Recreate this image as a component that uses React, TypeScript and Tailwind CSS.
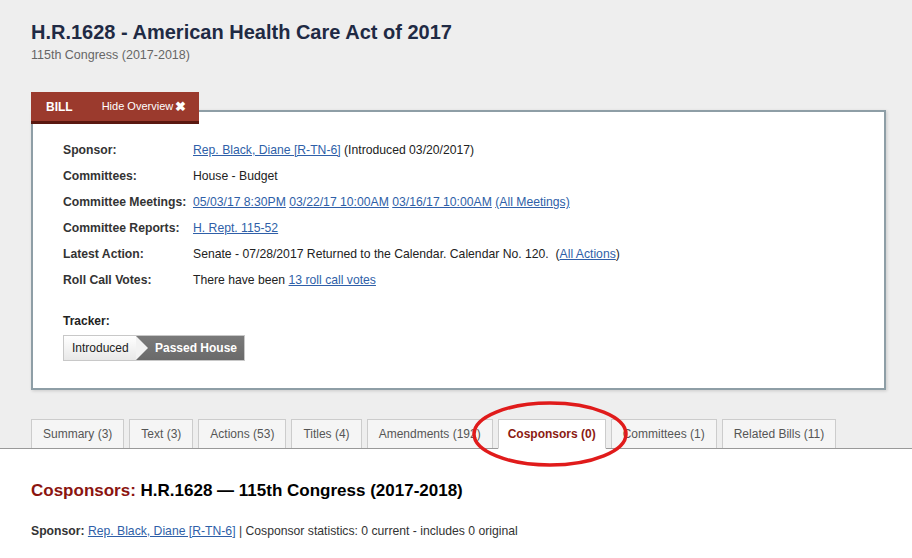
import React from "react";

const link = "text-[#2f5fa8] underline";

const rows: { label: string; value: React.ReactNode }[] = [
  {
    label: "Sponsor:",
    value: (
      <>
        <a className={link}>Rep. Black, Diane [R-TN-6]</a> (Introduced 03/20/2017)
      </>
    ),
  },
  { label: "Committees:", value: "House - Budget" },
  {
    label: "Committee Meetings:",
    value: (
      <>
        <a className={link}>05/03/17 8:30PM</a> <a className={link}>03/22/17 10:00AM</a>{" "}
        <a className={link}>03/16/17 10:00AM</a> <a className={link}>(All Meetings)</a>
      </>
    ),
  },
  { label: "Committee Reports:", value: <a className={link}>H. Rept. 115-52</a> },
  {
    label: "Latest Action:",
    value: (
      <>
        Senate - 07/28/2017 Returned to the Calendar. Calendar No. 120.&nbsp; (<a className={link}>All Actions</a>)
      </>
    ),
  },
  {
    label: "Roll Call Votes:",
    value: (
      <>
        There have been <a className={link}>13 roll call votes</a>
      </>
    ),
  },
];

const tabs = [
  "Summary (3)",
  "Text (3)",
  "Actions (53)",
  "Titles (4)",
  "Amendments (192)",
  "Cosponsors (0)",
  "Committees (1)",
  "Related Bills (11)",
];

export default function App() {
  return (
    <div className="w-[912px] h-[558px] overflow-hidden bg-[#eeeeee] font-['Liberation_Sans',Arial,sans-serif] relative">
      <div className="px-[31px] pt-[20px]">
        <h1 className="text-[20px] leading-[24px] font-bold text-[#1f2a44]">
          H.R.1628 - American Health Care Act of 2017
        </h1>
        <div className="text-[12.5px] leading-[14px] text-[#666] mt-[4px]">115th Congress (2017-2018)</div>

        <div className="mt-[30px] w-[855px]">
          <div className="relative z-10 flex items-center w-[168px] h-[32px] bg-[#9b3a2d] border-b-[3px] border-[#5a1810] text-white text-[12px]">
            <span className="font-bold ml-[15px]">BILL</span>
            <span className="ml-[29px] text-[11px] flex items-center gap-[2px]">
              Hide Overview <span className="font-bold text-[13px] leading-none">✖</span>
            </span>
          </div>
          <div className="-mt-[14px] h-[280px] bg-white border-2 border-[#8e9ea6] shadow-[1px_1px_3px_rgba(0,0,0,0.15)] pl-[30px] pt-[31px]">
            <div className="flex flex-col gap-[12px] text-[12.2px] leading-[14px] text-[#222]">
              {rows.map((r) => (
                <div key={r.label} className="flex">
                  <div className="w-[130px] font-bold text-[#333]">{r.label}</div>
                  <div>{r.value}</div>
                </div>
              ))}
            </div>
            <div className="mt-[27px] text-[12px] leading-[14px] font-bold text-[#222]">Tracker:</div>
            <div className="mt-[7px] flex h-[26px] w-[182px] border border-[#c8c8c8] text-[12px]">
              <div className="relative flex items-center pl-[8px] w-[72px] bg-gradient-to-b from-[#ffffff] to-[#e8e8e8] text-[#222]">
                Introduced
                <svg className="absolute left-[72px] top-0 z-10" width="14" height="24" viewBox="0 0 14 24">
                  <polygon points="0,0 12,12 0,24" fill="#f2f2f2" />
                </svg>
              </div>
              <div className="flex-1 flex items-center pl-[19px] bg-gradient-to-b from-[#7a7a7a] to-[#6a6a6a] text-white font-bold">
                Passed House
              </div>
            </div>
          </div>
        </div>
      </div>

      <div className="mt-[29px] flex gap-[5px] px-[31px] border-b border-[#999] relative">
        {tabs.map((t) =>
          t.startsWith("Cosponsors") ? (
            <div
              key={t}
              className="-mb-px h-[30px] flex items-center px-[9px] bg-white border border-[#ccc] border-b-white text-[12px] font-bold text-[#8b1a12]"
            >
              {t}
            </div>
          ) : (
            <div
              key={t}
              className="h-[29px] flex items-center px-[11px] bg-[#f5f5f5] border border-b-0 border-[#ccc] text-[12px] text-[#555]"
            >
              {t}
            </div>
          )
        )}
      </div>

      <div className="bg-white h-[200px] px-[31px] pt-[32px]">
        <h2 className="text-[17px] leading-[20px] font-bold text-black">
          <span className="text-[#8b1410]">Cosponsors:</span> H.R.1628 — 115th Congress (2017-2018)
        </h2>
        <div className="mt-[23px] text-[12.2px] leading-[14px] text-[#333]">
          <span className="font-bold">Sponsor:</span> <a className={link}>Rep. Black, Diane [R-TN-6]</a> | Cosponsor
          statistics: 0 current - includes 0 original
        </div>
      </div>

      <svg className="absolute left-[471px] top-[400px] pointer-events-none" width="158" height="68" viewBox="0 0 158 68">
        <ellipse cx="79" cy="34" rx="76" ry="31" fill="none" stroke="#e01b1b" strokeWidth="3.5" />
      </svg>
    </div>
  );
}
